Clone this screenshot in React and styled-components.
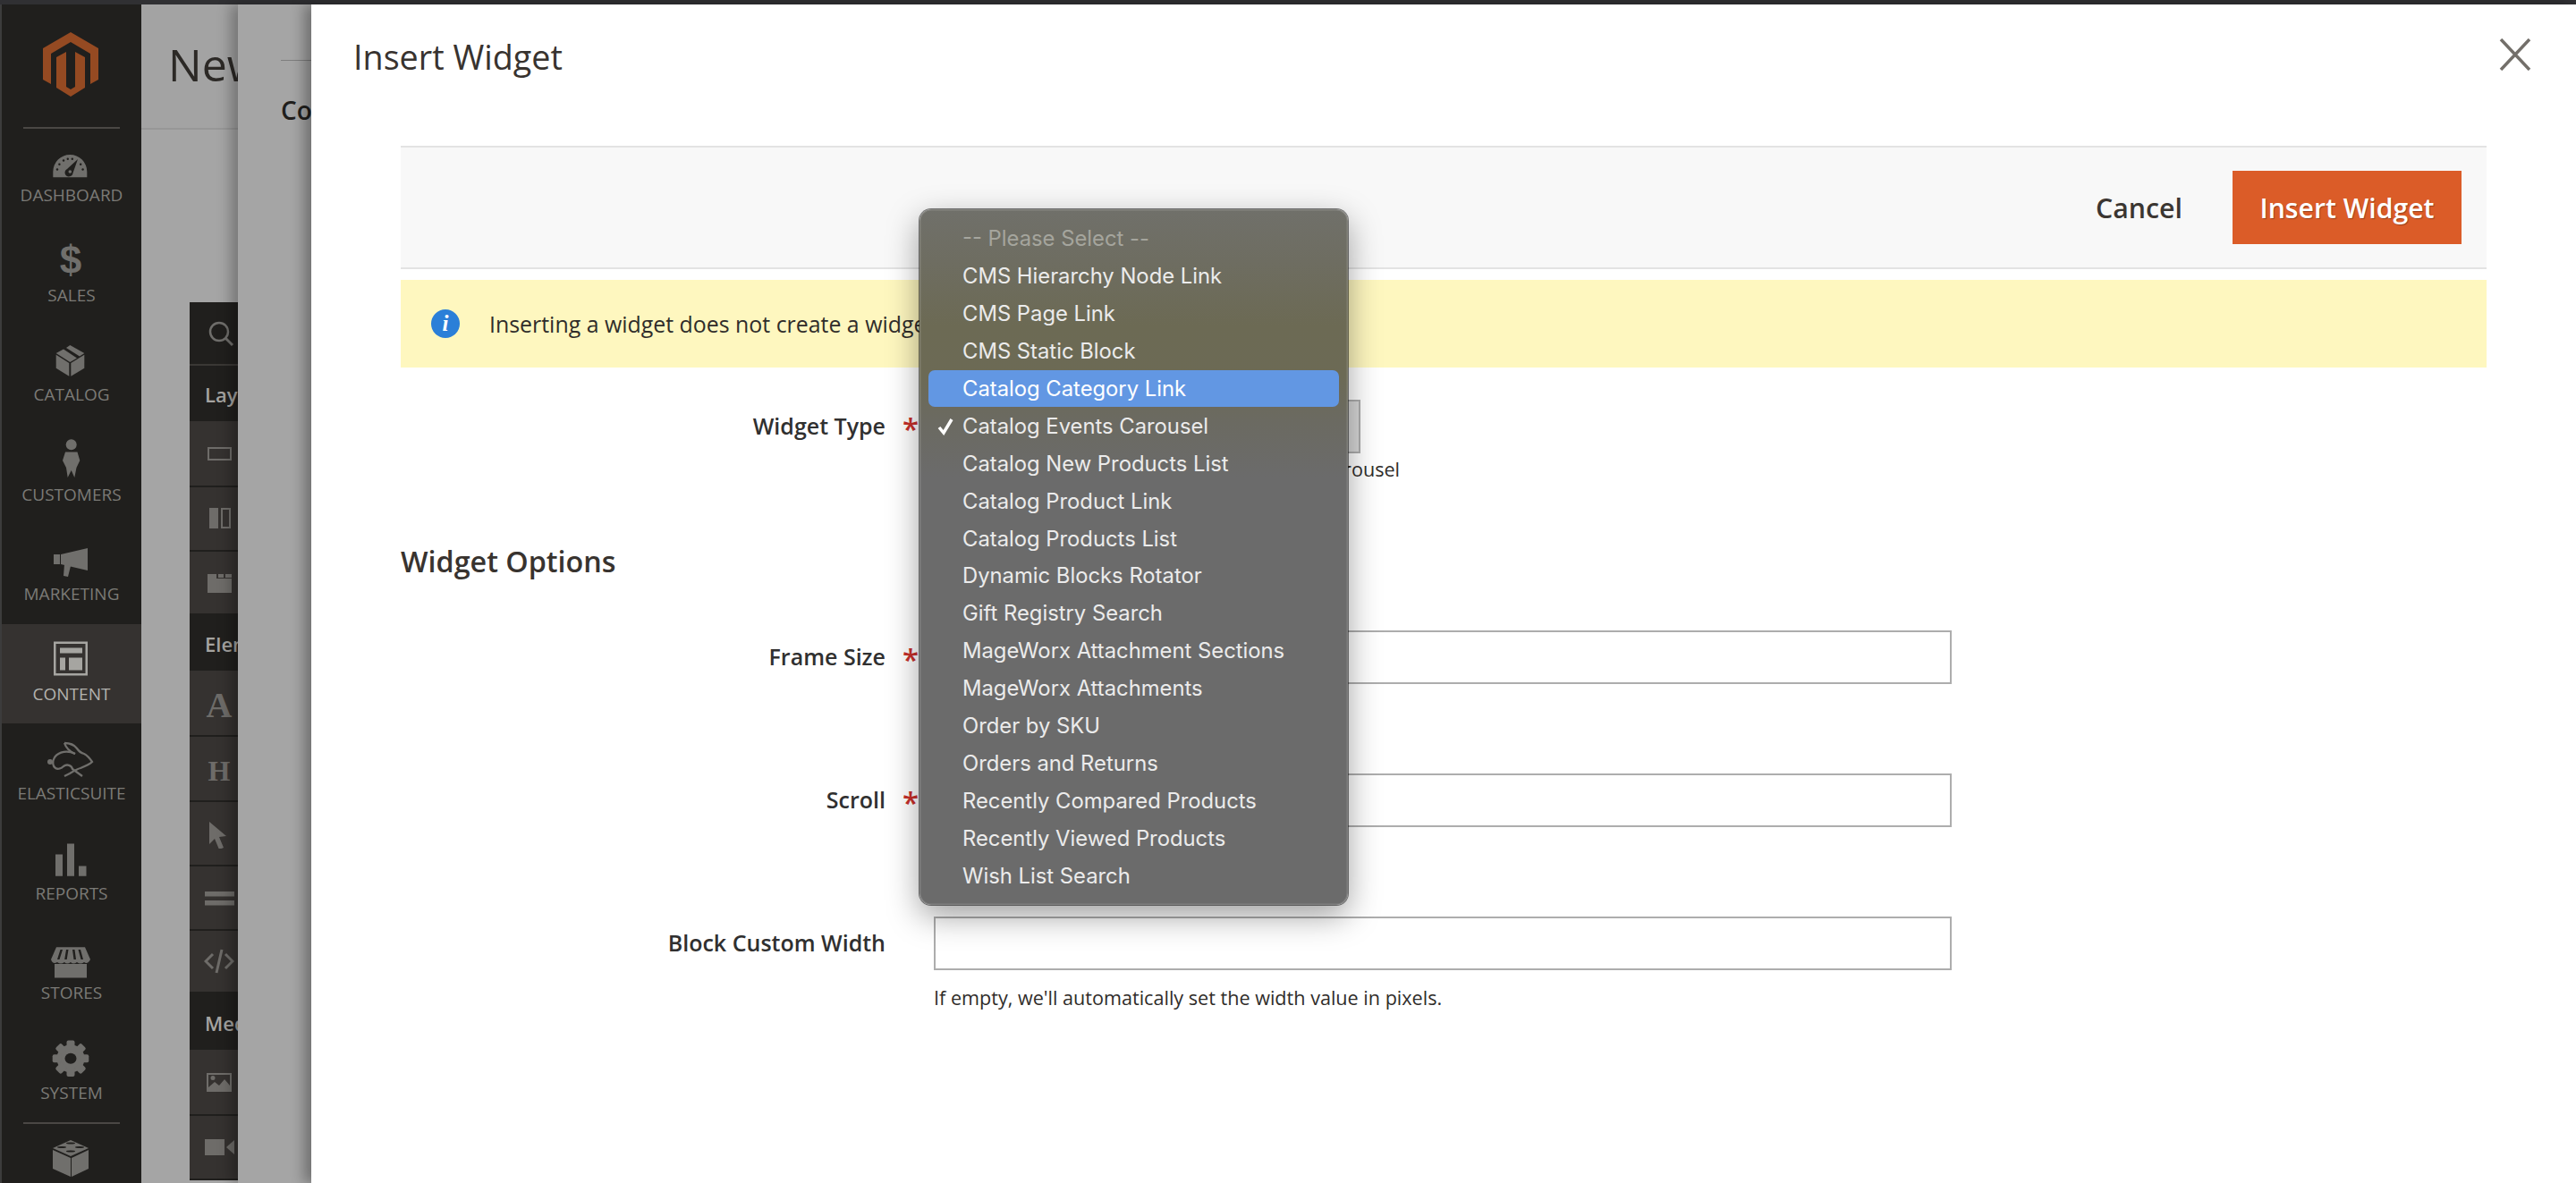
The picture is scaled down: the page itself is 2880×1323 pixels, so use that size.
import React from "react";
import styled, { createGlobalStyle } from "styled-components";

const GlobalStyle = createGlobalStyle`
   html, body {
      margin: 0;
      padding: 0;
      background: #fff;
   }
   body {
      font-family: "Open Sans", "Liberation Sans", sans-serif;
      color: #303030;
   }
   * {
      box-sizing: border-box;
   }
`;

const Page = styled.div`
   width: 2880px;
   height: 1323px;
   overflow: hidden;
   position: relative;
   display: flex;
   flex-direction: column;
`;

const TopStrip = styled.div`
   height: 5px;
   flex: none;
   background: #303033;
`;

const Columns = styled.div`
   flex: 1;
   display: flex;
   min-height: 0;
`;

/* left admin menu */
const Sidebar = styled.nav`
   width: 158px;
   flex: none;
   overflow: hidden;
   background: #201f1d;
   border-left: 2px solid #3c3c3c;
   display: flex;
   flex-direction: column;
`;

const LogoBox = styled.div`
   height: 137px;
   flex: none;
   padding: 31px 0 0 46px;
`;

const MenuRule = styled.div`
   height: 2px;
   flex: none;
   margin: 0 24px ${(p) => p.$after || 0}px;
   background: #4a4744;
`;

const MenuItem = styled.div`
   height: 111.5px;
   flex: none;
   padding-top: 18px;
   display: flex;
   flex-direction: column;
   align-items: center;
   background: ${(p) => (p.$active ? "#353230" : "transparent")};
   color: ${(p) => (p.$active ? "#a6a5a1" : "#706f6c")};

   svg {
      display: block;
      overflow: visible;
   }
`;

const MenuLabel = styled.span`
   margin-top: 5px;
   font-size: 19px;
   line-height: 22px;
   text-transform: uppercase;
   white-space: nowrap;
   color: ${(p) => (p.$active ? "#b3b2ae" : "#7b7a76")};
`;

/* page under the slide-ins */
const PageColumn = styled.div`
   width: 108px;
   flex: none;
   overflow: hidden;
   background: #a5a5a5;
`;

const PageHead = styled.div`
   height: 140px;
   padding: 33px 0 0 30px;
   background: #a3a3a3;
   border-bottom: 2px solid #979797;
   font-size: 50px;
   line-height: 68px;
   white-space: nowrap;
   color: #2c2926;
`;

const Toolbox = styled.div`
   width: 200px;
   margin: 193px 0 0 54px;
   background: #201f1d;
`;

const ToolSearch = styled.div`
   height: 71px;
   padding: 21px 0 0 20px;
   border-bottom: 2px solid #3a3835;
   color: #6f6e6b;
`;

const ToolHead = styled.div`
   height: ${(p) => p.$h || 62}px;
   padding: 2px 0 0 17px;
   display: flex;
   align-items: center;
   font-size: 22px;
   font-weight: 600;
   white-space: nowrap;
   color: #a5a4a1;
`;

const ToolItem = styled.div`
   height: ${(p) => p.$h || 72}px;
   padding-left: 16px;
   display: flex;
   align-items: center;
   background: #353230;
   border-bottom: 2px solid #201f1d;
   color: #6e6c69;
`;

const ToolGlyph = styled.span`
   width: 34px;
   margin-top: 5px;
   text-align: center;
   font-family: "Liberation Serif", serif;
   font-weight: 700;
   font-size: ${(p) => p.$size}px;
   line-height: 1;
`;

/* slide-in behind the modal */
const SlidePanel = styled.div`
   width: 82px;
   flex: none;
   overflow: hidden;
   position: relative;
   background: #a5a5a5;
   box-shadow: -8px 0 14px rgba(0, 0, 0, 0.28);
   padding: 62px 0 0 48px;
`;

const PanelRule = styled.div`
   width: 60px;
   height: 1px;
   background: #7e7e7e;
`;

const PanelHeading = styled.div`
   margin-top: 36px;
   font-size: 28px;
   line-height: 38px;
   font-weight: 600;
   white-space: nowrap;
   color: #211f1d;
`;

/* modal */
const Modal = styled.div`
   flex: 1;
   min-width: 0;
   position: relative;
   background: #fff;
   box-shadow: -8px 0 14px rgba(0, 0, 0, 0.32);
   padding: 0 100px;
`;

const ModalHead = styled.header`
   height: 158px;
   margin: 0 -50px 0 -53px;
   padding-top: 35px;
   display: flex;
   justify-content: space-between;
   align-items: flex-start;
`;

const ModalTitle = styled.h1`
   margin: 0;
   font-size: 37.7px;
   line-height: 48px;
   font-weight: 400;
   color: #38332f;
`;

const CloseIcon = styled.svg`
   width: 36px;
   height: 36px;
   margin-top: 3px;
   color: #736f6a;
`;

const Toolbar = styled.div`
   height: 138px;
   padding-right: 28px;
   display: flex;
   justify-content: flex-end;
   align-items: center;
   gap: 56px;
   background: #f8f8f8;
   border-top: 2px solid #e3e3e3;
   border-bottom: 2px solid #e3e3e3;
`;

const CancelButton = styled.span`
   font-size: 30.3px;
   font-weight: 600;
   color: #3b3632;
`;

const PrimaryButton = styled.span`
   width: 256px;
   height: 82px;
   display: flex;
   align-items: center;
   justify-content: center;
   background: #db5c28;
   font-size: 30.2px;
   font-weight: 600;
   color: #fff;
   text-shadow: 1px 1px 1px rgba(0, 0, 0, 0.3);
`;

const Notice = styled.div`
   height: 98px;
   margin-top: 12px;
   padding-left: 34px;
   display: flex;
   align-items: center;
   gap: 33px;
   background: #fef7bf;
   font-size: 24.9px;
   white-space: nowrap;
   color: #302d2a;
`;

const InfoBadge = styled.span`
   width: 32px;
   height: 32px;
   flex: none;
   border-radius: 50%;
   display: flex;
   align-items: center;
   justify-content: center;
   background: #2b7fd8;
   font-family: "Liberation Serif", serif;
   font-style: italic;
   font-weight: 700;
   font-size: 25px;
   color: #fff;
`;

const FieldRow = styled.div`
   display: grid;
   grid-template-columns: 542px 54px 1138px;
   margin-top: ${(p) => p.$top}px;
`;

const FieldLabel = styled.label`
   height: 60px;
   padding-bottom: 3px;
   display: flex;
   align-items: center;
   justify-content: flex-end;
   font-size: 25px;
   font-weight: 600;
   white-space: nowrap;
   color: #303030;
`;

const Star = styled.span`
   height: 60px;
   padding-left: 19px;
   display: flex;
   align-items: center;
   font-size: 33px;
   font-weight: 600;
   line-height: 1;
   color: #c8302b;

   &::before {
      content: "*";
      position: relative;
      top: 2px;
   }
`;

const TextInput = styled.div`
   height: 60px;
   background: #fff;
   border: 2px solid #adadad;
`;

const SelectBox = styled.div`
   width: 477px;
   height: 60px;
   padding-left: 20px;
   display: flex;
   align-items: center;
   justify-content: space-between;
   background: #fff;
   border: 2px solid #adadad;
   font-size: 25px;
   white-space: nowrap;
`;

const SelectArrow = styled.span`
   width: 60px;
   align-self: stretch;
   background: #d8d8d8;
`;

const HelpText = styled.div`
   margin-top: ${(p) => p.$top || 3}px;
   font-size: 21.6px;
   line-height: 30px;
   white-space: nowrap;
   color: #302d2a;
`;

const SectionTitle = styled.h2`
   margin: 65px 0 0;
   font-size: 32.3px;
   line-height: 44px;
   font-weight: 600;
   color: #38332f;
`;

/* native select popup, lies over the form. The gradient stands for the
   page colours showing through its translucent material */
const Dropdown = styled.div`
   position: absolute;
   left: 1028px;
   top: 234px;
   width: 479px;
   height: 778px;
   padding: 12px 10px;
   border-radius: 13px;
   overflow: hidden;
   background: linear-gradient(
      180deg,
      #70706a 0,
      #6e6d61 60px,
      #6c6a54 130px,
      #6c6a55 185px,
      #6b6a61 235px,
      #6b6b6b 300px,
      #6b6b6b 100%
   );
   box-shadow: 0 0 0 1px rgba(0, 0, 0, 0.5),
      inset 0 0 0 1.5px rgba(255, 255, 255, 0.14),
      0 12px 36px rgba(0, 0, 0, 0.38);
   font-family: Inter, "Liberation Sans", sans-serif;
`;

const Option = styled.div`
   height: 41.9px;
   padding-left: 38px;
   position: relative;
   display: flex;
   align-items: center;
   border-radius: 7px;
   font-size: 23.8px;
   white-space: nowrap;
   color: ${(p) =>
      p.$disabled ? "#a5a59d" : p.$highlight ? "#ffffff" : "#ebebeb"};
   background: ${(p) => (p.$highlight ? "#6297e3" : "transparent")};
`;

const Check = styled.svg`
   position: absolute;
   left: 10px;
   top: 12px;
   width: 19px;
   height: 20px;
   color: #fff;
`;

const options = [
   "-- Please Select --",
   "CMS Hierarchy Node Link",
   "CMS Page Link",
   "CMS Static Block",
   "Catalog Category Link",
   "Catalog Events Carousel",
   "Catalog New Products List",
   "Catalog Product Link",
   "Catalog Products List",
   "Dynamic Blocks Rotator",
   "Gift Registry Search",
   "MageWorx Attachment Sections",
   "MageWorx Attachments",
   "Order by SKU",
   "Orders and Returns",
   "Recently Compared Products",
   "Recently Viewed Products",
   "Wish List Search",
];

// icons, all in a 64x44 slot
const MENU_BG = "#201f1d";

const Slot = ({ children }) => (
   <svg width="64" height="44" viewBox="0 0 64 44" fill="currentColor">
      {children}
   </svg>
);

const DashboardIcon = () => (
   <Slot>
      <path d="M11.300 40.300V34a19 19 0 0 1 38 0v6.300z" />
      <g fill={MENU_BG}>
         {[170, 145, 120, 100, 80, 35, 10].map((a) => (
            <circle
               key={a}
               cx={30.3 + 14.5 * Math.cos((a * Math.PI) / 180)}
               cy={34 - 14.5 * Math.sin((a * Math.PI) / 180)}
               r="1.200"
            />
         ))}
         <path d="M39 20l-5.500 15.500a4.500 4.500 0 1 1-6.500-4.500z" />
      </g>
      <circle cx="30.300" cy="34" r="1.800" />
   </Slot>
);

const SalesIcon = () => (
   <Slot>
      <text
         x="31"
         y="36"
         textAnchor="middle"
         fontFamily="Liberation Sans"
         fontWeight="700"
         fontSize="44"
      >
         $
      </text>
   </Slot>
);

const CatalogIcon = () => (
   <Slot>
      <path d="M14.700 15.700L29.300 25v14.700l-14.600-9z" />
      <path d="M46.300 15.700L31.300 25v14.700l15-9z" />
      <path d="M14.700 14L23 9.500l15 10-7.700 4.500z" />
      <path d="M26 8l4.300-3 16 9-5.300 3.500z" />
   </Slot>
);

const CustomersIcon = () => (
   <Slot>
      <circle cx="31.700" cy="4.200" r="6" />
      <path d="M25 12.500h13.500l2.800 9.500-3.800 8-2.200 11-3.600-8-4 8-1.700-11-4-8z" />
   </Slot>
);

const MarketingIcon = () => (
   <Slot>
      <path d="M12 16h7v11h-7z" />
      <path d="M20 16l30-7v25l-30-7z" />
      <path d="M24 27l7 2-3 12-5-1z" />
   </Slot>
);

const ContentIcon = () => (
   <Slot>
      <path fillRule="evenodd" d="M12 1.500h38v38H12zM14.500 4v33h33V4z" />
      <path d="M19 8.500h25v6H19zM19 19.500h6v14h-6zM29 19.500h15v14H29z" />
   </Slot>
);

const RabbitIcon = () => (
   <Slot>
      <g fill="none" stroke="currentColor" strokeWidth="2.300">
         <path d="M36 16C28 12 18 13 13 20c-3 5-2 10 1 12 3 2 7 0 9-2 4-3 9-1 10 3l11 8" />
         <path d="M24 4c6 0 11 2 14 6 2 3 4 5 8 6 4 2 7 6 9 9-3 3-8 5-13 7-4 1-7 3-12 6l-6 3" />
         <path d="M24 4c2 6 7 10 12 12" />
      </g>
      <circle cx="8" cy="25" r="3" />
   </Slot>
);

const ReportsIcon = () => (
   <Slot>
      <path d="M14 16.500h8v24.200h-8zM27 4.500h8v36.200h-8zM40 29.500h8.500v11.200H40z" />
   </Slot>
);

const StoresIcon = () => (
   <Slot>
      <path d="M15 9.300h32L53 23q-3 6-7 3-4 3-8 0-4 3-7 0-4 3-7 0-4 3-8 0-5 3-7-3z" />
      <path d="M13 28h36v15.500H13z" />
      <path
         fill={MENU_BG}
         d="M19.500 12l-3.500 11h2.500l3.500-11zM26 12l-1.800 11h2.500l1.800-11zM33 12l1.500 11H37l-1.500-11zM39.500 12l3 11H45l-3-11z"
      />
   </Slot>
);

const GearIcon = () => (
   <Slot>
      <circle cx="31" cy="21.800" r="15.500" />
      {[0, 45, 90, 135, 180, 225, 270, 315].map((a) => (
         <rect
            key={a}
            x="26.500"
            y="1.500"
            width="9"
            height="10"
            rx="2"
            transform={`rotate(${a} 31 21.800)`}
         />
      ))}
      <ellipse cx="31" cy="21.800" rx="6.500" ry="6" fill={MENU_BG} />
   </Slot>
);

const PartnersIcon = () => (
   <Slot>
      <path d="M11 11l20 9v21l-20-9zM51 11l-19 9v21l19-9z" />
      <path d="M31 0l20 9-20 9-20-9z" />
      <g fill={MENU_BG}>
         <ellipse cx="31" cy="3.500" rx="5" ry="1" />
         <ellipse cx="21" cy="8" rx="5" ry="1" />
         <ellipse cx="41" cy="8" rx="5" ry="1" />
         <ellipse cx="31" cy="12.500" rx="5" ry="1" />
      </g>
   </Slot>
);

const menu = [
   { label: "Dashboard", Icon: DashboardIcon },
   { label: "Sales", Icon: SalesIcon },
   { label: "Catalog", Icon: CatalogIcon },
   { label: "Customers", Icon: CustomersIcon },
   { label: "Marketing", Icon: MarketingIcon },
   { label: "Content", Icon: ContentIcon, active: true },
   { label: "ElasticSuite", Icon: RabbitIcon },
   { label: "Reports", Icon: ReportsIcon },
   { label: "Stores", Icon: StoresIcon },
   { label: "System", Icon: GearIcon },
];

// toolbox icons, 34x34
const Tool = ({ children }) => (
   <svg width="34" height="34" viewBox="0 0 34 34" fill="currentColor">
      {children}
   </svg>
);

const AdminMenu = () => (
   <Sidebar>
      <LogoBox>
         <svg width="62" height="72" viewBox="0 0 62 72" fill="#954a22">
            <path d="M31 0l31 18v35l-9 5V24L31 11 9 24v34l-9-5V18z" />
            <path d="M15 28l11-6v39l5 3 5-3V22l11 6v34L31 72l-16-10z" />
         </svg>
      </LogoBox>
      <MenuRule $after={-4} />
      {menu.map(({ label, Icon, active }) => (
         <MenuItem key={label} $active={active}>
            <Icon />
            <MenuLabel $active={active}>{label}</MenuLabel>
         </MenuItem>
      ))}
      <MenuRule />
      <MenuItem>
         <PartnersIcon />
      </MenuItem>
   </Sidebar>
);

const ToolboxPanel = () => (
   <Toolbox>
      <ToolSearch>
         <svg
            width="30"
            height="30"
            viewBox="0 0 30 30"
            fill="none"
            stroke="currentColor"
            strokeWidth="2.500"
         >
            <circle cx="13" cy="12" r="10" />
            <path d="M20 19l8 8" strokeWidth="3" />
         </svg>
      </ToolSearch>
      <ToolHead>Layout</ToolHead>
      <ToolItem $h={74}>
         <Tool>
            <path fillRule="evenodd" d="M4 10h27v15H4zM6 12v11h23V12z" />
         </Tool>
      </ToolItem>
      <ToolItem>
         <Tool>
            <path
               fillRule="evenodd"
               d="M6 5h10v23H6zM19 5h11v23H19zM21 7v19h7V7z"
            />
         </Tool>
      </ToolItem>
      <ToolItem $h={71}>
         <Tool>
            <path d="M4 7h10v5h17v16H4zM16 7h6v4h-6zM24 7h7v4h-7z" />
         </Tool>
      </ToolItem>
      <ToolHead>Elements</ToolHead>
      <ToolItem $h={74}>
         <ToolGlyph $size={40}>A</ToolGlyph>
      </ToolItem>
      <ToolItem $h={73}>
         <ToolGlyph $size={32}>H</ToolGlyph>
      </ToolItem>
      <ToolItem>
         <Tool>
            <path d="M6 4l19 16-8 1 5 12-5 2-5-12-6 6z" />
         </Tool>
      </ToolItem>
      <ToolItem>
         <Tool>
            <path d="M1 10h33v5.500H1zM1 20h33v5.500H1z" />
         </Tool>
      </ToolItem>
      <ToolItem $h={70}>
         <Tool>
            <g fill="none" stroke="currentColor" strokeWidth="3">
               <path d="M10 9l-8 8 8 8M24 9l8 8-8 8M20 4l-6 26" />
            </g>
         </Tool>
      </ToolItem>
      <ToolHead $h={63}>Media</ToolHead>
      <ToolItem $h={74}>
         <Tool>
            <path
               fillRule="evenodd"
               d="M3 7h28v21H3zM5 9v14l7-6 5 4 6-7 6 7V9zM10 10a2.500 2.500 0 1 1 0 5 2.500 2.500 0 1 1 0-5z"
            />
         </Tool>
      </ToolItem>
      <ToolItem>
         <Tool>
            <path d="M1 8h22v18H1zM25 17l9-8v16z" />
         </Tool>
      </ToolItem>
   </Toolbox>
);

const WidgetForm = () => (
   <>
      <Notice>
         <InfoBadge>i</InfoBadge>
         Inserting a widget does not create a widget instance.
      </Notice>
      <FieldRow $top={36}>
         <FieldLabel>Widget Type</FieldLabel>
         <Star />
         <div>
            <SelectBox>
               Catalog Events Carousel
               <SelectArrow />
            </SelectBox>
            <HelpText>List all open catalog events as an animated carousel</HelpText>
         </div>
      </FieldRow>
      <SectionTitle>Widget Options</SectionTitle>
      <FieldRow $top={56}>
         <FieldLabel>Frame Size</FieldLabel>
         <Star />
         <TextInput />
      </FieldRow>
      <FieldRow $top={100}>
         <FieldLabel>Scroll</FieldLabel>
         <Star />
         <TextInput />
      </FieldRow>
      <FieldRow $top={100}>
         <FieldLabel>Block Custom Width</FieldLabel>
         <span />
         <div>
            <TextInput />
            <HelpText $top={16}>
               If empty, we'll automatically set the width value in pixels.
            </HelpText>
         </div>
      </FieldRow>
   </>
);

const App = () => (
   <Page>
      <GlobalStyle />
      <TopStrip />
      <Columns>
         <AdminMenu />
         <PageColumn>
            <PageHead>New Block</PageHead>
            <ToolboxPanel />
         </PageColumn>
         <SlidePanel>
            <PanelRule />
            <PanelHeading>Content</PanelHeading>
         </SlidePanel>
         <Modal>
            <ModalHead>
               <ModalTitle>Insert Widget</ModalTitle>
               <CloseIcon viewBox="0 0 36 36">
                  <path
                     d="M2 1l32 34M34 1L2 35"
                     stroke="currentColor"
                     strokeWidth="3.500"
                     fill="none"
                  />
               </CloseIcon>
            </ModalHead>
            <Toolbar>
               <CancelButton>Cancel</CancelButton>
               <PrimaryButton>Insert Widget</PrimaryButton>
            </Toolbar>
            <WidgetForm />
         </Modal>
      </Columns>
      <Dropdown>
         {options.map((name, i) => (
            <Option key={name} $disabled={i === 0} $highlight={i === 4}>
               {i === 5 && (
                  <Check viewBox="0 0 19 20">
                     <path
                        d="M2 11l5 6L16 2"
                        stroke="currentColor"
                        strokeWidth="3.500"
                        fill="none"
                     />
                  </Check>
               )}
               {name}
            </Option>
         ))}
      </Dropdown>
   </Page>
);

export default App;
